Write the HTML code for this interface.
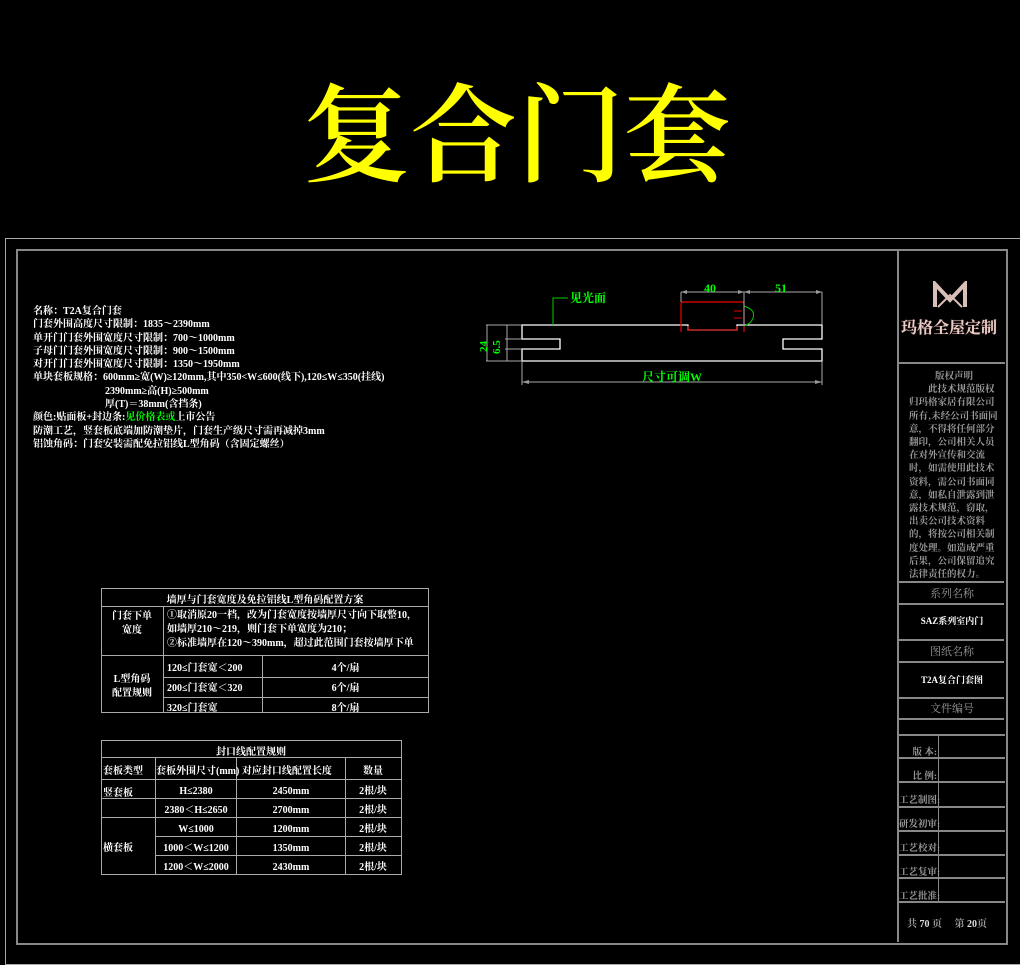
<!DOCTYPE html>
<html><head><meta charset="utf-8"><style>
body{margin:0;width:1020px;height:957px;background:#000;position:relative;overflow:hidden;font-family:"Liberation Serif","Noto Serif CJK SC",serif;color:#fff}
.a{position:absolute;white-space:nowrap}
.t{position:absolute;font-size:107px;left:303px;top:74px;color:#ff0;font-family:"Noto Serif CJK SC",serif;font-weight:600;line-height:1;letter-spacing:0px}
.L{font-size:10px;font-weight:bold;line-height:13.3px;left:33px;top:305px}
.g{color:#0f0}
.b{position:absolute;border:1px solid #999}
.c{font-size:10px;font-weight:bold;text-align:center}
.gr{color:#999}
</style></head><body>
<div class="t">复合门套</div>
<div style="position:absolute;left:5px;top:238px;width:1020px;height:725px;border:1px solid #aaa"></div>
<div style="position:absolute;left:16px;top:249px;width:988px;height:692px;border:2px solid #888"></div>
<div class="a L">名称：T2A复合门套<br>门套外围高度尺寸限制：1835～2390mm<br>单开门门套外围宽度尺寸限制：700～1000mm<br>子母门门套外围宽度尺寸限制：900～1500mm<br>对开门门套外围宽度尺寸限制：1350～1950mm<br>单块套板规格：600mm≥宽(W)≥120mm,其中350&lt;W≤600(线下),120≤W≤350(挂线)<br><span style="padding-left:72px">2390mm≥高(H)≥500mm</span><br><span style="padding-left:72px">厚(T)＝38mm(含挡条)</span><br>颜色:贴面板+封边条:<span class="g">见价格表或</span>上市公告<br>防潮工艺，竖套板底端加防潮垫片，门套生产级尺寸需再减掉3mm<br>铝蚀角码：门套安装需配免拉铝线L型角码（含固定螺丝）</div>
<svg class="a" style="left:0;top:0" width="1020" height="957">
<g stroke="#fff" stroke-width="1.3" fill="none">
<path d="M522 325H688V330H737V325H822V339H783V349H822V361H522V349H560V339H522Z"/>
</g>
<path d="M681 332V304Q681 302 683 302H742Q744 302 744 304V332" stroke="#e00" fill="none" stroke-width="1.2"/>
<path d="M688 326V330H737V326" stroke="#e00" fill="none"/>
<path d="M734 311H742M734 318H742" stroke="#e00"/>
<path d="M744 306Q756 310 753 318Q751 324 744 326" stroke="#0c0" fill="none"/>
<path d="M553 325V298H568" stroke="#0c0" fill="none"/>
<g stroke="#aaa" fill="none" stroke-width="1">
<path d="M681 292H822M744 292V326M681 292V302M822 292V325M522 382H822M522 361V385M822 361V385M486 325H522M486 361H522M487 325V361M507 325V361M505 339H522M505 349H522"/>
</g>
<g fill="#999"><path d="M681 292l6-2v4zM744 292l-6-2v4zM744 292l6-2v4zM822 292l-6-2v4zM522 382l7-2v4zM822 382l-7-2v4z"/></g>
<g fill="#0f0" font-size="12" font-weight="bold" font-family="Liberation Serif,Noto Serif CJK SC,serif">
<text x="704" y="292">40</text><text x="775" y="292">51</text>
<text x="570" y="302">见光面</text>
<text x="642" y="381">尺寸可调W</text>
<text transform="translate(487 352) rotate(-90)" font-size="11">24</text>
<text transform="translate(500 354) rotate(-90)" font-size="11">6.5</text>
</g>
</svg>
<div style="position:absolute;left:897px;top:250px;width:2px;height:692px;background:#888"></div>
<div style="position:absolute;left:897px;top:362px;width:108px;height:2px;background:#888"></div>
<svg class="a" style="left:932px;top:281px" width="36" height="28"><path d="M3 26V3L18 19L33 3V26" stroke="#d8c0b8" stroke-width="4" fill="none"/><path d="M6 26L18 14L30 26" stroke="#d8c0b8" stroke-width="2" fill="none"/></svg>
<div class="a" style="left:901px;top:315px;font-size:16px;font-weight:bold;color:#e8d0c8;text-shadow:0 0 1px #844">玛格全屋定制</div>
<div class="a gr" style="left:909px;top:369px;width:90px;font-size:9.5px;font-family:'Noto Serif CJK SC',serif;font-weight:bold;line-height:13.2px;white-space:normal;word-break:break-all"><div style="text-align:center">版权声明</div>&emsp;&emsp;此技术规范版权归玛格家居有限公司所有,未经公司书面同意，不得将任何部分翻印，公司相关人员在对外宣传和交流时，如需使用此技术资料，需公司书面同意，如私自泄露到泄露技术规范，窃取，出卖公司技术资料的，将按公司相关制度处理。如造成严重后果，公司保留追究法律责任的权力。</div>
<div class="b" style="left:898px;top:581px;width:106px;height:20px;border-width:2px 0;border-color:#888"></div>
<div class="a gr c" style="left:899px;top:585px;width:106px;font-size:11px;font-weight:normal">系列名称</div>
<div class="a c" style="left:899px;top:614px;width:106px;font-size:9px">SAZ系列室内门</div>
<div class="b" style="left:898px;top:639px;width:106px;height:20px;border-width:2px 0;border-color:#888"></div>
<div class="a gr c" style="left:899px;top:643px;width:106px;font-size:11px;font-weight:normal">图纸名称</div>
<div class="a c" style="left:899px;top:673px;width:106px;font-size:9px">T2A复合门套图</div>
<div class="b" style="left:898px;top:697px;width:106px;height:19px;border-width:2px 0;border-color:#888"></div>
<div class="a gr c" style="left:899px;top:700px;width:106px;font-size:11px;font-weight:normal">文件编号</div>
<div style="position:absolute;left:898px;top:734px;width:107px;height:2px;background:#888"></div>
<div style="position:absolute;left:938px;top:735px;width:1px;height:167px;background:#888"></div>
<div class="a" style="left:898px;top:757px;width:107px;height:2px;background:#888"></div>
<div class="a" style="left:898px;top:781px;width:107px;height:2px;background:#888"></div>
<div class="a" style="left:898px;top:806px;width:107px;height:2px;background:#888"></div>
<div class="a" style="left:898px;top:830px;width:107px;height:2px;background:#888"></div>
<div class="a" style="left:898px;top:854px;width:107px;height:2px;background:#888"></div>
<div class="a" style="left:898px;top:877px;width:107px;height:2px;background:#888"></div>
<div class="a" style="left:898px;top:901px;width:107px;height:2px;background:#888"></div>
<div class="a gr" style="left:899px;top:741px;width:38px;text-align:right;font-size:9.5px;font-weight:bold;line-height:24px">版 本:<br>比 例:<br>工艺制图:<br>研发初审:<br>工艺校对:<br>工艺复审:<br>工艺批准:</div>
<div class="a gr" style="left:907px;top:915px;font-size:10px;font-weight:bold">共 <span style="color:#ddd">70</span> 页&emsp;&nbsp;第 <span style="color:#ddd">20</span>页</div>
<svg class="a" style="left:0;top:0" width="1020" height="957"><g stroke="#aaa" fill="none">
<rect x="101.5" y="588.5" width="327" height="124"/>
<path d="M101 606.5H428M101 655.5H428M163 677.5H428M163 697.5H428M163.5 606V712M262.5 655V712"/>
<rect x="101.5" y="740.5" width="300" height="134"/>
<path d="M101 757.5H401M101 779.5H401M101 798.5H401M155 817.5H401M101 817.5H155M155 836.5H401M155 855.5H401M155.5 757V874M236.5 757V874M345.5 757V874"/>
</g></svg>
<div class="a c" style="left:101px;top:591px;width:328px">墙厚与门套宽度及免拉铝线L型角码配置方案</div>
<div class="a c" style="left:101px;top:610px;width:62px;line-height:14px">门套下单<br>宽度</div>
<div class="a" style="left:167px;top:609px;font-size:10px;font-weight:bold;line-height:14px">①取消原20一档，改为门套宽度按墙厚尺寸向下取整10，<br>如墙厚210～219，则门套下单宽度为210；<br>②标准墙厚在120～390mm，超过此范围门套按墙厚下单</div>
<div class="a c" style="left:101px;top:673px;width:62px;line-height:14px">L型角码<br>配置规则</div>
<div class="a" style="left:167px;top:659px;font-size:10px;font-weight:bold;line-height:20px">120≤门套宽＜200<br>200≤门套宽＜320<br>320≤门套宽</div>
<div class="a c" style="left:263px;top:659px;width:165px;line-height:20px">4个/扇<br>6个/扇<br>8个/扇</div>
<div class="a c" style="left:101px;top:743px;width:300px">封口线配置规则</div>
<div class="a" style="left:103px;top:762px;font-size:10px;font-weight:bold">套板类型</div>
<div class="a" style="left:156px;top:762px;font-size:10px;font-weight:bold">套板外围尺寸(mm) 对应封口线配置长度</div>
<div class="a c" style="left:345px;top:762px;width:56px">数量</div>
<div class="a" style="left:103px;top:784px;font-size:10px;font-weight:bold">竖套板</div>
<div class="a" style="left:103px;top:839px;font-size:10px;font-weight:bold">横套板</div>
<div class="a c" style="left:155px;top:782px;width:82px;line-height:19px">H≤2380<br>2380＜H≤2650<br>W≤1000<br>1000＜W≤1200<br>1200＜W≤2000</div>
<div class="a c" style="left:236px;top:782px;width:110px;line-height:19px">2450mm<br>2700mm<br>1200mm<br>1350mm<br>2430mm</div>
<div class="a c" style="left:345px;top:782px;width:56px;line-height:19px">2根/块<br>2根/块<br>2根/块<br>2根/块<br>2根/块</div>
</body></html>
